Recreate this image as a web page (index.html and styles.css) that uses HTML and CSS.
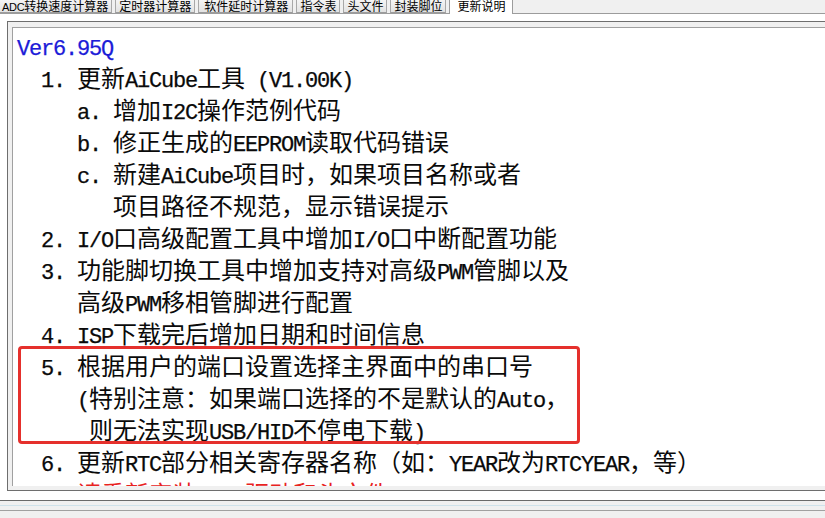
FILE: index.html
```html
<!DOCTYPE html>
<html lang="zh-CN">
<head>
<meta charset="utf-8">
<title>更新说明</title>
<link rel="stylesheet" href="styles.css">
</head>
<body>
<div class="app">
  <div class="tabs">
    <div class="tab first"><span class="tl">ADC</span>转换速度计算器</div>
    <div class="tab">定时器计算器</div>
    <div class="tab wide">软件延时计算器</div>
    <div class="tab">指令表</div>
    <div class="tab">头文件</div>
    <div class="tab">封装脚位</div>
    <div class="tab active">更新说明</div>
  </div>
  <div class="page">
    <div class="frame">
      <div class="doc">
        <div class="ln ver"><span class="l">Ver6.95Q</span></div>
        <div class="ln p24"><span class="l">1. </span>更新<span class="l">AiCube</span>工具<span class="l"> (V1.00K)</span></div>
        <div class="ln p60"><span class="l">a. </span>增加<span class="l">I2C</span>操作范例代码</div>
        <div class="ln p60"><span class="l">b. </span>修正生成的<span class="l">EEPROM</span>读取代码错误</div>
        <div class="ln p60"><span class="l">c. </span>新建<span class="l">AiCube</span>项目时，如果项目名称或者</div>
        <div class="ln p96">项目路径不规范，显示错误提示</div>
        <div class="ln p24"><span class="l">2. I/O</span>口高级配置工具中增加<span class="l">I/O</span>口中断配置功能</div>
        <div class="ln p24"><span class="l">3. </span>功能脚切换工具中增加支持对高级<span class="l">PWM</span>管脚以及</div>
        <div class="ln p60">高级<span class="l">PWM</span>移相管脚进行配置</div>
        <div class="ln p24"><span class="l">4. ISP</span>下载完后增加日期和时间信息</div>
        <div class="hl">
          <div class="ln p24"><span class="l">5. </span>根据用户的端口设置选择主界面中的串口号</div>
          <div class="ln p60"><span class="l">(</span>特别注意：如果端口选择的不是默认的<span class="l">Auto</span>，</div>
          <div class="ln p72">则无法实现<span class="l">USB/HID</span>不停电下载<span class="l">)</span></div>
        </div>
        <div class="ln p24"><span class="l">6. </span>更新<span class="l">RTC</span>部分相关寄存器名称（如：<span class="l">YEAR</span>改为<span class="l">RTCYEAR</span>，等）</div>
        <div class="ln p60 red">请重新安装<span class="l">Keil</span>驱动和头文件</div>
      </div>
    </div>
  </div>
  <div class="footer">
    <div class="rule-blue"></div>
    <div class="rule-gray"></div>
  </div>
</div>
</body>
</html>
```

FILE: styles.css
```css
html, body {
  margin: 0;
  padding: 0;
}
body {
  background: #f0f0f0;
  width: 825px;
  height: 518px;
  overflow: hidden;
}
.app {
  width: 825px;
}

/* tabs */
.tabs {
  display: flex;
  align-items: flex-start;
  gap: 3px;
  height: 14px;
  background: linear-gradient(to top, #9c9c9c 1px, #f0f0f0 1px);
  font-family: "Noto Sans CJK SC", sans-serif;
  font-size: 12px;
  color: #000;
}
.tab {
  height: 13px;
  line-height: 12px;
  padding: 0 3px;
  border-left: 1px solid #a8a8a8;
  border-right: 1px solid #a8a8a8;
  border-bottom: 1px solid #9c9c9c;
  box-sizing: border-box;
  background: linear-gradient(#f4f4f4, #e2e2e2);
  white-space: nowrap;
}
.tab.first {
  border-left: none;
  padding-left: 2px;
}
.tab.wide {
  padding: 0 4px 0 5px;
}
.tl {
  font-family: "Liberation Sans Narrow", "Liberation Sans", sans-serif;
  font-size: 11px;
  letter-spacing: -0.3px;
}
.tab.active {
  height: 14px;
  border-bottom: none;
  background: #fff;
  padding: 0 7px;
  border-color: #9c9c9c;
}

/* page */
.page {
  background: #fff;
  padding: 7px 0 9px 7px;
}
.frame {
  background: #f0f0f0;
  border-top: 1px solid #6e6e6e;
  border-left: 1px solid #6e6e6e;
  border-bottom: 1px solid #6e6e6e;
  padding: 5px 0 4px 4px;
}
.doc {
  position: relative;
  height: 459px;
  box-sizing: border-box;
  overflow: hidden;
  background: #fff;
  border-top: 1px solid #a0a0a0;
  border-left: 1px solid #a0a0a0;
  padding: 1px 0 0 4px;
  font-family: "Noto Sans CJK SC", sans-serif;
  font-size: 24px;
  color: #0a0a0a;
}
.ln {
  height: 32px;
  line-height: 32px;
  white-space: pre;
}
.l {
  font-family: "Liberation Mono", monospace;
  font-size: 22px;
  letter-spacing: -1.2px;
  -webkit-text-stroke: 0.25px currentColor;
}
.ver {
  color: #1c1cd8;
}
.p24 { padding-left: 24px; }
.p60 { padding-left: 60px; }
.p72 { padding-left: 72px; }
.p96 { padding-left: 96px; }
.red {
  color: #e8231f;
}
.hl {
  position: relative;
}
.hl::after {
  content: "";
  position: absolute;
  left: 1px;
  top: -3px;
  width: 562px;
  height: 98px;
  box-sizing: border-box;
  border: 3px solid #e5302c;
  border-radius: 4px;
  pointer-events: none;
}

/* footer */
.footer {
  border-top: 1px solid #6a6a6a;
  padding-top: 4px;
  height: 17px;
  box-sizing: border-box;
}
.rule-blue {
  height: 1px;
  background: #cfe2ea;
  margin-bottom: 4px;
}
.rule-gray {
  height: 1px;
  background: #a0a0a0;
}
```
